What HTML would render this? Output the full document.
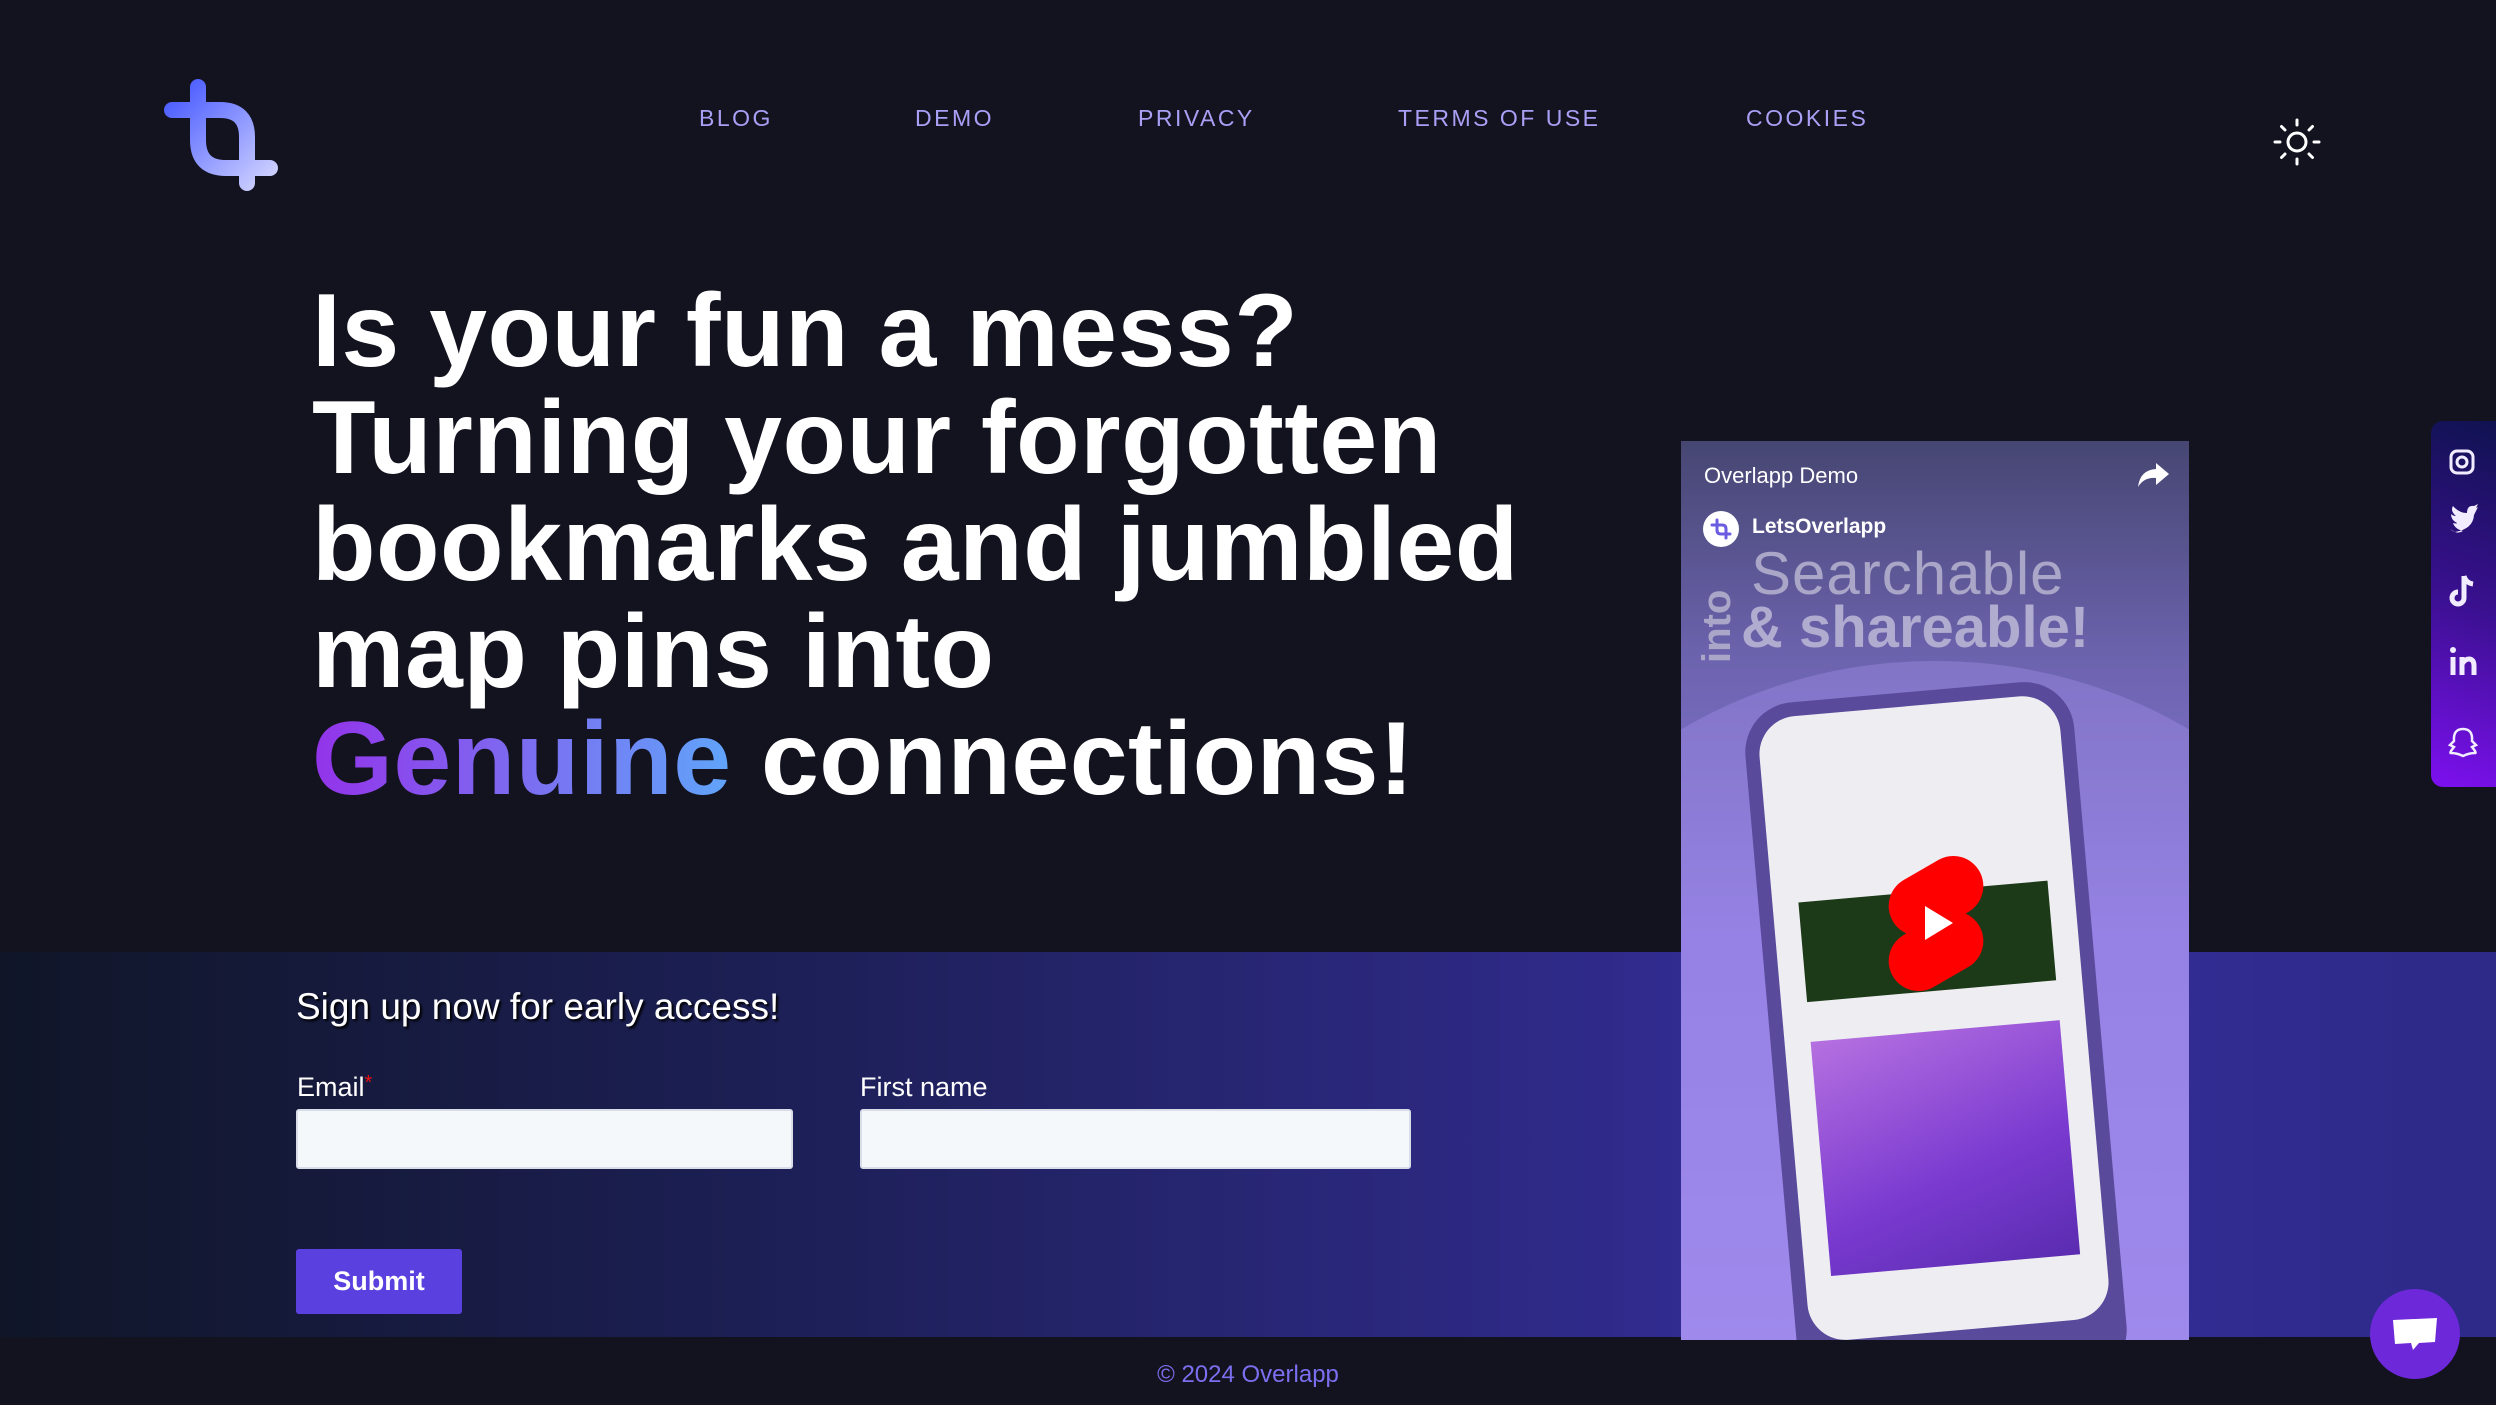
<!DOCTYPE html>
<html><head><meta charset="utf-8"><style>
*{margin:0;padding:0;box-sizing:border-box}
body{width:2496px;height:1405px;background:#13121f;position:relative;overflow:hidden;font-family:"Liberation Sans",sans-serif}
.nav a{position:absolute;top:105px;font-size:23px;letter-spacing:2.5px;color:#a8a0f5;text-decoration:none}
h1{position:absolute;left:312px;top:278px;font-size:104px;line-height:107px;color:#fff;font-weight:700;letter-spacing:0.5px;white-space:nowrap}
.g{background:linear-gradient(90deg,#9333ea,#7c6cf0 50%,#60a5fa);-webkit-background-clip:text;background-clip:text;color:transparent}
.band{position:absolute;left:0;top:952px;width:2496px;height:385px;background:linear-gradient(90deg,#101628 0%,#1c1f54 30%,#352e9b 75%,#2d2a88 100%)}
.lbl{position:absolute;color:#fff;font-size:27px}
.inp{position:absolute;background:#f4f8fb;border-radius:3px;border:2px solid #d8dde8}
</style></head><body>
<svg style="position:absolute;left:150px;top:60px" width="160" height="150" viewBox="0 0 160 150">
<defs><linearGradient id="lg" x1="0" y1="0" x2="1" y2="1"><stop offset="0" stop-color="#4658ff"/><stop offset="1" stop-color="#cfd2ff"/></linearGradient></defs>
<path d="M22 50 H70 Q97 50 97 77 V123 M48 27 V80 Q48 108 76 108 H120" fill="none" stroke="url(#lg)" stroke-width="16" stroke-linecap="round"/>
</svg>
<div class="nav"><a style="left:699px">BLOG</a><a style="left:915px">DEMO</a><a style="left:1138px">PRIVACY</a><a style="left:1398px">TERMS OF USE</a><a style="left:1746px">COOKIES</a></div>
<svg style="position:absolute;left:2273px;top:118px" width="48" height="48" viewBox="0 0 48 48" fill="none" stroke="#fff" stroke-width="3" stroke-linecap="round">
<circle cx="24" cy="24" r="9"/><path d="M24 2v5M24 41v5M2 24h5M41 24h5M8.5 8.5l3.5 3.5M36 36l3.5 3.5M8.5 39.5l3.5-3.5M36 12l3.5-3.5"/></svg>
<h1>Is your fun a mess?<br>Turning your forgotten<br>bookmarks and jumbled<br>map pins into<br><span class="g">Genuine</span> connections!</h1>
<div class="band"></div>
<div style="position:absolute;left:296px;top:986px;color:#fff;font-size:37px;text-shadow:2px 2px 2px #000">Sign up now for early access!</div>
<div class="lbl" style="left:297px;top:1072px">Email<span style="color:#e11;font-size:20px;vertical-align:top">*</span></div>
<div class="lbl" style="left:860px;top:1072px">First name</div>
<div class="inp" style="left:296px;top:1109px;width:497px;height:60px"></div>
<div class="inp" style="left:860px;top:1109px;width:551px;height:60px"></div>
<div style="position:absolute;left:296px;top:1249px;width:166px;height:65px;background:#5b40e0;border-radius:3px;color:#fff;font-weight:700;font-size:27px;text-align:center;line-height:65px">Submit</div>
<div style="position:absolute;left:0;width:2496px;text-align:center;top:1361px;color:#7b6ff0;font-size:24px">© 2024 Overlapp</div>
<!-- video -->
<div style="position:absolute;left:1681px;top:441px;width:508px;height:899px;background:linear-gradient(180deg,#464672 0%,#6d64b0 25%,#8b78dd 55%,#9a84ea 100%);overflow:hidden">
<div style="position:absolute;left:-200px;top:220px;width:908px;height:800px;border-radius:50%;background:rgba(170,150,240,.35)"></div>
<div style="position:absolute;left:23px;top:22px;color:#fff;font-size:22px">Overlapp Demo</div>
<svg style="position:absolute;left:455px;top:20px" width="34" height="28" viewBox="0 0 34 28"><path d="M20 2 L33 13 L20 24 V17 Q8 16 2 26 Q4 9 20 8Z" fill="#fff"/></svg>
<div style="position:absolute;left:22px;top:70px;width:36px;height:36px;border-radius:50%;background:#fff"></div>
<svg style="position:absolute;left:28px;top:76px" width="24" height="24" viewBox="0 0 24 24" fill="none" stroke="#6a5ce0" stroke-width="3" stroke-linecap="round"><path d="M3 8H13Q17 8 17 12V21M8 3V13Q8 17 12 17H21"/></svg>
<div style="position:absolute;left:71px;top:74px;color:#fff;font-size:21px;font-weight:700">LetsOverlapp</div>
<div style="position:absolute;left:70px;top:98px;color:#a9a6c8;font-size:60px;letter-spacing:1px">Searchable</div>
<div style="position:absolute;left:60px;top:153px;color:#b0acd0;font-size:58px;font-weight:700">&amp; shareable!</div>
<div style="position:absolute;left:14px;color:#a9a6c8;font-size:40px;font-weight:700;transform:rotate(-90deg);transform-origin:left top;top:222px">into</div>
<div style="position:absolute;left:90px;top:250px;width:330px;height:700px;border-radius:50px;background:#5a4a9c;transform:rotate(-5deg)">
<div style="position:absolute;left:14px;top:14px;right:14px;bottom:60px;border-radius:38px;background:#eeeef2"></div>
<div style="position:absolute;left:40px;top:340px;width:250px;height:235px;background:linear-gradient(160deg,#b570e0,#7a3ad0 60%,#5a2cb0)"></div>
<div style="position:absolute;left:40px;top:200px;width:250px;height:100px;background:#1d3a18"></div>
</div>
<svg style="position:absolute;left:200px;top:410px" width="110" height="145" viewBox="0 0 110 145"><rect x="5" y="15" width="100" height="60" rx="30" transform="rotate(-30 55 45)" fill="#f00"/><rect x="5" y="70" width="100" height="60" rx="30" transform="rotate(-30 55 100)" fill="#f00"/><rect x="25" y="35" width="60" height="75" fill="#f00" transform="rotate(-30 55 72)"/><path d="M44 55 L72 72 L44 89Z" fill="#fff"/></svg>
</div>
<!-- social -->
<div style="position:absolute;left:2431px;top:421px;width:70px;height:366px;border-radius:12px 0 0 12px;background:linear-gradient(200deg,#0f1250 0%,#3a1090 50%,#7d10f0 100%)"></div>
<svg style="position:absolute;left:2431px;top:421px" width="65" height="366" viewBox="0 0 65 366" fill="none" stroke="#f1ecff" stroke-width="3">
<rect x="20" y="30" width="22" height="22" rx="6"/><circle cx="31" cy="41" r="5"/>
<path d="M19 108 Q26 114 32 110 Q24 108 22 102 Q26 103 26 102 Q20 99 20 93 Q22 95 25 95 Q19 90 22 85 Q28 92 36 92 Q36 84 43 85 L47 83 L45 87 L47 86 Q44 92 43 94 Q42 108 24 111Z" fill="#f1ecff" stroke="none"/>
<path d="M33 155 V177 A6 6 0 1 1 27 171 M33 155 Q35 162 42 163" stroke-width="5"/>
<path d="M22 236 V254 M31 236 V254 M31 243 Q34 238 38 238 Q43 238 43 245 V254" stroke-width="5"/><circle cx="22" cy="229" r="3" fill="#f1ecff" stroke="none"/>
<path d="M32 308 Q22 308 23 320 L19 324 L23 326 Q18 332 20 332 Q26 332 32 335 Q38 332 44 332 Q46 332 41 326 L45 324 L41 320 Q42 308 32 308Z" stroke-width="2.5"/>
</svg>
<div style="position:absolute;left:2370px;top:1289px;width:90px;height:90px;border-radius:50%;background:#6d28d9"></div>
<svg style="position:absolute;left:2391px;top:1316px" width="48" height="36" viewBox="0 0 48 36"><path d="M2 4 L46 2 L44 26 L28 27 L22 34 L20 27 L4 28Z" fill="#fff"/></svg>
</body></html>
